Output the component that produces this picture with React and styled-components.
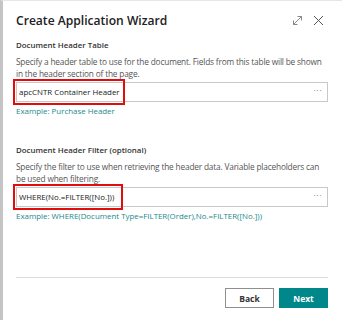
import React from "react";
import styled, { createGlobalStyle } from "styled-components";

const Global = createGlobalStyle`
  html, body { margin: 0; padding: 0; background: #fff; }
  body { font-family: "Open Sans", "Noto Sans", sans-serif; }
`;

const Frame = styled.div`
  width: 342px;
  height: 320px;
  box-sizing: border-box;
  border-left: 3px solid #c4c4c4;
  border-top: 1px solid #e6e6e6;
  background: #fff;
  display: flex;
  flex-direction: column;
  padding: 0 14px 0 13px;
  color: #212121;
`;

const Header = styled.div`
  display: flex;
  align-items: center;
  justify-content: space-between;
  height: 38px;
`;

const Title = styled.h1`
  margin: 0;
  font-size: 12.1px;
  font-weight: 600;
  color: #212121;
`;

const IconRow = styled.div`
  display: flex;
  gap: 10px;
  align-items: center;
  margin-right: 4px;
`;

const IconBtn = styled.span`
  display: inline-flex;
  width: 11px;
  height: 11px;
`;

const Section = styled.section`
  display: flex;
  flex-direction: column;
  margin-top: ${(p) => p.$top}px;
`;

const Label = styled.div`
  font-size: 7.9px;
  font-weight: 600;
  color: #333;
  line-height: 12px;
`;

const Desc = styled.div`
  font-size: 8.3px;
  letter-spacing: -0.18px;
  color: #555;
  line-height: 11.5px;
  margin-top: 5px;
`;

const FieldWrap = styled.div`
  position: relative;
  margin-top: 3px;
`;

const Field = styled.div`
  height: 18px;
  border: 1px solid #c8c8c8;
  display: flex;
  align-items: center;
  justify-content: space-between;
  padding: 0 5px 0 2px;
  font-size: 7.9px;
  color: #212121;
`;

const Dots = styled.span`
  color: #8a8a8a;
  font-size: 9px;
  letter-spacing: 0.5px;
  margin-top: -3px;
`;

const Highlight = styled.div`
  position: absolute;
  left: -3px;
  top: -3px;
  width: ${(p) => p.$w}px;
  height: 26px;
  border: 2px solid #e00d0d;
  box-sizing: border-box;
`;

const Example = styled.div`
  font-size: 7.9px;
  color: #1a8a8c;
  margin-top: 4px;
  line-height: 11px;
`;

const Spacer = styled.div`
  flex: 1;
`;

const Divider = styled.hr`
  border: 0;
  border-top: 1px solid #dcdcdc;
  margin: 0;
  width: 100%;
`;

const Footer = styled.div`
  display: flex;
  justify-content: flex-end;
  gap: 5px;
  padding: 10px 0 12px;
`;

const Button = styled.button`
  width: 49px;
  height: 20px;
  font-family: inherit;
  font-size: 8.5px;
  font-weight: 700;
  border: 1px solid ${(p) => (p.$primary ? "#00878a" : "#8f8f8f")};
  background: ${(p) => (p.$primary ? "#00878a" : "#fff")};
  color: ${(p) => (p.$primary ? "#fff" : "#333")};
  padding: 0;
  cursor: pointer;
`;

export default function App() {
  return (
    <>
      <Global />
      <Frame>
        <Header>
          <Title>Create Application Wizard</Title>
          <IconRow>
            <IconBtn>
              <svg width="11" height="11" viewBox="0 0 11 11" fill="none" stroke="#7a7a7a" strokeWidth="0.9">
                <path d="M1.5 9.5 L9.5 1.5 M5.5 1.5 H9.5 V5.5 M1.5 5.5 V9.5 H5.5" />
              </svg>
            </IconBtn>
            <IconBtn>
              <svg width="11" height="11" viewBox="0 0 11 11" fill="none" stroke="#555" strokeWidth="1">
                <path d="M1 1 L10 10 M10 1 L1 10" />
              </svg>
            </IconBtn>
          </IconRow>
        </Header>
        <Section $top={0}>
          <Label>Document Header Table</Label>
          <Desc>
            Specify a header table to use for the document. Fields from this table will be shown in the header section of the page.
          </Desc>
          <FieldWrap>
            <Field>
              <span>apcCNTR Container Header</span>
              <Dots>···</Dots>
            </Field>
            <Highlight $w={112} />
          </FieldWrap>
          <Example>Example: Purchase Header</Example>
        </Section>
        <Section $top={27}>
          <Label>Document Header Filter (optional)</Label>
          <Desc>
            Specify the filter to use when retrieving the header data. Variable placeholders can be used when filtering.
          </Desc>
          <FieldWrap>
            <Field>
              <span>WHERE(No.=FILTER([No.]))</span>
              <Dots>···</Dots>
            </Field>
            <Highlight $w={110} />
          </FieldWrap>
          <Example>Example: WHERE(Document Type=FILTER(Order),No.=FILTER([No.]))</Example>
        </Section>
        <Spacer />
        <Divider />
        <Footer>
          <Button>Back</Button>
          <Button $primary>Next</Button>
        </Footer>
      </Frame>
    </>
  );
}
